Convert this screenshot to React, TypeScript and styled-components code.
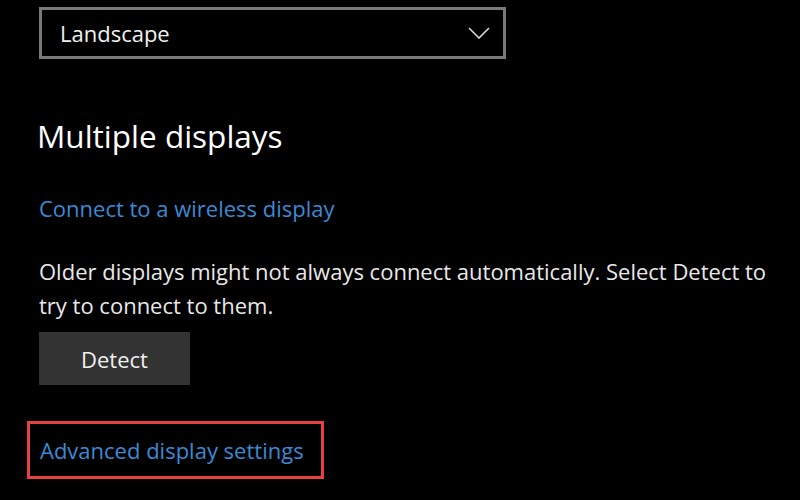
import React from "react";
import styled, { createGlobalStyle } from "styled-components";

const Global = createGlobalStyle`
  html, body { margin: 0; padding: 0; background: #000; }
  body { font-family: "Open Sans", "Noto Sans", sans-serif; color: #e8e8e8; }
  * { box-sizing: border-box; }
`;

const Page = styled.div`
  width: 800px;
  height: 500px;
  overflow: hidden;
  background: #000;
  padding: 7px 0 0 39px;
  display: flex;
  flex-direction: column;
  align-items: flex-start;
`;

const Select = styled.div`
  width: 467px;
  height: 52px;
  border: 3px solid #7a7a7a;
  display: flex;
  align-items: center;
  justify-content: space-between;
  padding: 0 13px 0 18px;
  font-size: 22px;
  color: #f0f0f0;
`;

const Heading = styled.h2`
  margin: 56px 0 0 -2px;
  font-weight: 400;
  font-size: 31.5px;
  line-height: 42px;
  color: #fff;
`;

const Link = styled.a`
  color: #3b8ad6;
  font-size: 22px;
  line-height: 30px;
  text-decoration: none;
`;

const LinkRow = styled.div`
  margin-top: 36px;
`;

const Paragraph = styled.p`
  margin: 31px 0 0 0;
  font-size: 22px;
  line-height: 34px;
  width: 745px;
`;

const Button = styled.button`
  margin-top: 10px;
  width: 151px;
  height: 53px;
  background: #333;
  border: none;
  color: #f0f0f0;
  font-family: inherit;
  font-size: 22px;
`;

const Highlight = styled.div`
  margin: 36px 0 0 -12px;
  width: 297px;
  height: 58px;
  border: 3px solid #e8403f;
  display: flex;
  align-items: center;
  padding-left: 10px;
`;

const Chevron = () => (
  <svg width="22" height="12" viewBox="0 0 22 12" fill="none">
    <path d="M1 1 L11 11 L21 1" stroke="#d8d8d8" strokeWidth="1.6" />
  </svg>
);

export default function App() {
  return (
    <>
      <Global />
      <Page>
        <Select>
          <span>Landscape</span>
          <Chevron />
        </Select>
        <Heading>Multiple displays</Heading>
        <LinkRow>
          <Link href="#">Connect to a wireless display</Link>
        </LinkRow>
        <Paragraph>
          Older displays might not always connect automatically. Select Detect to try to connect to them.
        </Paragraph>
        <Button>Detect</Button>
        <Highlight>
          <Link href="#">Advanced display settings</Link>
        </Highlight>
      </Page>
    </>
  );
}
